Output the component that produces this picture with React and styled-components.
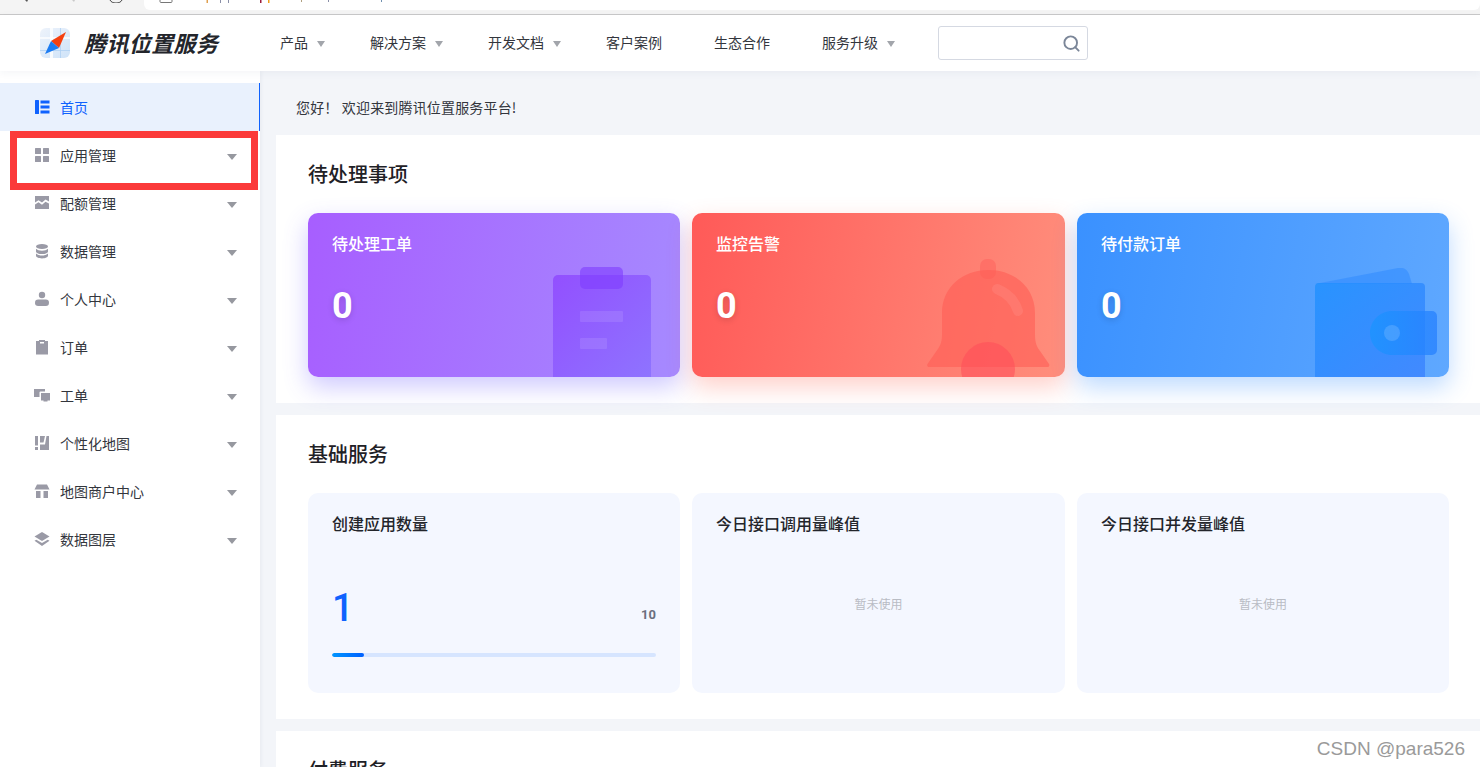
import React from 'react'
import styled, { createGlobalStyle } from 'styled-components'
import { Search } from 'lucide-react'

const GlobalStyle = createGlobalStyle`
  html, body { margin: 0; padding: 0; height: 100%; }
  body {
    overflow: hidden;
    background: #f3f5f9;
    font-family: "Noto Sans CJK SC", "Liberation Sans", sans-serif;
    color: #26282e;
  }
  * { box-sizing: border-box; }
`

const sideItems = [
  { label: '首页', icon: 'home', active: true },
  { label: '应用管理', icon: 'grid' },
  { label: '配额管理', icon: 'quota' },
  { label: '数据管理', icon: 'db' },
  { label: '个人中心', icon: 'user' },
  { label: '订单', icon: 'order' },
  { label: '工单', icon: 'ticket' },
  { label: '个性化地图', icon: 'map' },
  { label: '地图商户中心', icon: 'store' },
  { label: '数据图层', icon: 'layers' },
]

const navItems = [
  { label: '产品', caret: true },
  { label: '解决方案', caret: true },
  { label: '开发文档', caret: true },
  { label: '客户案例' },
  { label: '生态合作' },
  { label: '服务升级', caret: true },
]

function SideIcon({ name }) {
  const fill = name === 'home' ? '#0f62fe' : '#9a9aa6'
  return (
    <svg width="16" height="16" viewBox="0 0 16 16" fill={fill}>
      {name === 'home' && (
        <>
          <rect x="1" y="1" width="4" height="14" rx="0.5" />
          <rect x="6.500" y="1.500" width="9" height="3" />
          <rect x="6.500" y="6.500" width="9" height="3" />
          <rect x="6.500" y="11.500" width="9" height="3" />
        </>
      )}
      {name === 'grid' && (
        <>
          <rect x="1" y="1" width="6" height="6" rx="0.5" />
          <rect x="9" y="1" width="6" height="6" rx="0.5" />
          <rect x="1" y="9" width="6" height="6" rx="0.5" />
          <rect x="9" y="9" width="6" height="6" rx="0.5" />
        </>
      )}
      {name === 'quota' && (
        <path d="M1 1h14v5.500L11.500 4.600 8 7.600 4.500 5.200 1 7.600zM1 9.600l3.500-2.400L8 9.700l3.500-3L15 8.600V14H1z" />
      )}
      {name === 'db' && (
        <>
          <ellipse cx="8" cy="3.500" rx="6" ry="2.600" />
          <path d="M2 5.700c1.200 1.300 3.400 2 6 2s4.800-.7 6-2v2.700c0 1.400-2.700 2.600-6 2.600s-6-1.200-6-2.600z" />
          <path d="M2 10.500c1.200 1.300 3.400 2 6 2s4.800-.7 6-2v2.300c0 1.400-2.700 2.600-6 2.600s-6-1.200-6-2.600z" />
        </>
      )}
      {name === 'user' && (
        <>
          <circle cx="8" cy="4" r="3.200" />
          <rect x="1" y="8.500" width="14" height="6.500" rx="3.200" />
        </>
      )}
      {name === 'order' && (
        <path d="M5 2V1h6v1h3v13.500H2V2zm1 1v1.500h4V3z" fillRule="evenodd" />
      )}
      {name === 'ticket' && (
        <>
          <path d="M0 2h11v2.500H6.500a1 1 0 0 0-1 1V10H0z" />
          <rect x="7" y="6" width="9" height="7.500" />
          <rect x="9.500" y="13" width="4" height="1.500" />
        </>
      )}
      {name === 'map' && (
        <>
          <rect x="1" y="1" width="3" height="9.500" />
          <rect x="1" y="12" width="3" height="3" />
          <path d="M6 1h5l-1.500 6.500H6zM12.500 1H15v14H6v-5.500h5z" />
        </>
      )}
      {name === 'store' && (
        <>
          <path d="M3 1.500h10l2.500 5h-15z" />
          <rect x="2" y="8" width="4.500" height="7" />
          <rect x="9.500" y="8" width="4.500" height="7" />
        </>
      )}
      {name === 'layers' && (
        <>
          <path d="M8 1l7.500 4.500L8 10 .5 5.500z" />
          <path d="M2.300 8.700L8 12.100l5.700-3.400 1.800 1.100L8 15 .5 9.800z" />
        </>
      )}
    </svg>
  )
}

function LogoMark() {
  return (
    <svg width="30" height="30" viewBox="0 0 30 30">
      <defs>
        <linearGradient id="logoBg" x1="0" y1="0" x2="1" y2="1">
          <stop offset="0" stopColor="#eef3fb" />
          <stop offset="1" stopColor="#cfe3f8" />
        </linearGradient>
      </defs>
      <rect width="30" height="30" rx="6" fill="url(#logoBg)" />
      <rect x="10" width="3" height="30" fill="#fff" opacity="0.8" />
      <rect y="9" width="30" height="2" fill="#fff" opacity="0.7" />
      <rect x="20" width="1" height="30" fill="#a9cdf2" opacity="0.7" />
      <rect y="22" width="30" height="1" fill="#a9cdf2" opacity="0.7" />
      <path d="M26 4L11 13l8 7z" fill="#f5400f" />
      <path d="M11 13l8 7L5 26z" fill="#1c7cf2" />
    </svg>
  )
}

function BrowserScraps() {
  return (
    <svg width="420" height="3" viewBox="0 0 420 3">
      <path d="M25 0h3l-1 2z" fill="#555" />
      <path d="M72 0h3l-1 2z" fill="#c9c9c9" />
      <path d="M110 0c1 2 3 3 6 3s5-1 6-3" fill="none" stroke="#444" strokeWidth="1" />
      <path d="M160 0v1.500a1 1 0 0 0 1 1h10a1 1 0 0 0 1-1V0" fill="none" stroke="#777" strokeWidth="1" />
      <rect x="206.500" width="1.500" height="3" fill="#e0a050" />
      <rect x="220" width="1" height="3" fill="#8a8fa8" />
      <rect x="228" width="1" height="3" fill="#8a8fa8" />
      <rect x="260" width="1.500" height="3" fill="#9c1c3c" />
      <rect x="268" width="1.500" height="3" fill="#f0a020" />
      <rect x="301" width="1" height="2" fill="#b0a080" />
      <rect x="328" width="1" height="2" fill="#8a8fa8" />
      <rect x="381" width="1" height="2" fill="#7090b0" />
    </svg>
  )
}

function ClipboardArt() {
  return (
    <svg width="98" height="110" viewBox="0 0 98 110">
      <defs>
        <linearGradient id="clipFill" x1="0" y1="0" x2="1" y2="1">
          <stop offset="0" stopColor="#8f48ff" />
          <stop offset="1" stopColor="#8a70ff" />
        </linearGradient>
      </defs>
      <path d="M0 13a5 5 0 0 1 5-5h88a5 5 0 0 1 5 5v97H0z" fill="url(#clipFill)" opacity="0.85" />
      <rect x="27" y="0" width="43" height="22" rx="5" fill="#7f3cff" opacity="0.6" />
      <rect x="27" y="44" width="43" height="11" rx="1" fill="#fff" opacity="0.1" />
      <rect x="27" y="71" width="27" height="11" rx="1" fill="#fff" opacity="0.1" />
    </svg>
  )
}

function BellArt() {
  return (
    <svg width="123" height="118" viewBox="0 0 123 118">
      <rect x="53" y="0" width="16" height="20" rx="7" fill="#ff6a62" opacity="0.7" />
      <path
        d="M15 54C15 28 36 11 61.500 11S108 28 108 54V76c0 8 2 12 5 16l9 13c.8 1.500 0 3-1.500 3H2c-1.500 0-2.300-1.500-1.500-3l9-13c3-4 5.500-8 5.500-16z"
        fill="#ff5d55"
        opacity="0.6"
      />
      <path d="M70 30c10 4 18 12 21 22" fill="none" stroke="#fff" strokeOpacity="0.08" strokeWidth="10" strokeLinecap="round" />
      <circle cx="61" cy="110" r="27" fill="#ff4d5a" opacity="0.55" />
    </svg>
  )
}

function WalletArt() {
  return (
    <svg width="122" height="109" viewBox="0 0 122 109">
      <defs>
        <linearGradient id="walletFill" x1="0" y1="0" x2="1" y2="1">
          <stop offset="0" stopColor="#1e90ff" />
          <stop offset="1" stopColor="#3b82ff" />
        </linearGradient>
        <linearGradient id="walletClasp" x1="0" y1="0" x2="1" y2="0">
          <stop offset="0" stopColor="#1a94ff" />
          <stop offset="1" stopColor="#2680ff" />
        </linearGradient>
      </defs>
      <path d="M0 16L83 0c5-1 9 1 11 6l3 10z" fill="#2f8bff" opacity="0.55" />
      <path d="M0 19a4 4 0 0 1 4-4h102a4 4 0 0 1 4 4v90H0z" fill="url(#walletFill)" opacity="0.8" />
      <path d="M55 43h62a5 5 0 0 1 5 5v34a5 5 0 0 1-5 5H77c-12 0-22-10-22-22s10-22 22-22z" fill="url(#walletClasp)" opacity="0.75" />
      <circle cx="77" cy="65" r="8" fill="#fff" opacity="0.15" />
    </svg>
  )
}

export default function App() {
  return (
    <Page>
      <GlobalStyle />
      <BrowserStrip>
        <UrlBox />
        <Scraps><BrowserScraps /></Scraps>
      </BrowserStrip>
      <Header>
        <Logo>
          <LogoMark />
          <LogoText>腾讯位置服务</LogoText>
        </Logo>
        <Nav>
          {navItems.map((item) => (
            <NavItem key={item.label}>
              {item.label}
              {item.caret && <NavCaret />}
            </NavItem>
          ))}
        </Nav>
        <SearchBox>
          <Search size={19} color="#7b8698" strokeWidth={2.4} />
        </SearchBox>
      </Header>
      <Body>
        <Sidebar>
          {sideItems.map((item) => (
            <SideRow key={item.label} $active={item.active}>
              <SideIcon name={item.icon} />
              <SideLabel>{item.label}</SideLabel>
              {!item.active && <SideCaret />}
            </SideRow>
          ))}
          <Highlight />
        </Sidebar>
        <Main>
          <Greeting>您好！ 欢迎来到腾讯位置服务平台!</Greeting>
          <Panel>
            <PanelTitle>待处理事项</PanelTitle>
            <CardGrid>
              <StatCard $from="#a75eff" $to="#a68aff" $shadow="rgba(96, 80, 255, 0.3)">
                <StatTitle>待处理工单</StatTitle>
                <StatNumber>0</StatNumber>
                <StatArt $right={29}><ClipboardArt /></StatArt>
              </StatCard>
              <StatCard $from="#ff5a58" $to="#ff8e7c" $shadow="rgba(255, 110, 90, 0.32)">
                <StatTitle>监控告警</StatTitle>
                <StatNumber>0</StatNumber>
                <StatArt $right={15}><BellArt /></StatArt>
              </StatCard>
              <StatCard $from="#3a91ff" $to="#5fa8ff" $shadow="rgba(50, 140, 255, 0.32)">
                <StatTitle>待付款订单</StatTitle>
                <StatNumber>0</StatNumber>
                <StatArt $right={12}><WalletArt /></StatArt>
              </StatCard>
            </CardGrid>
          </Panel>
          <Panel>
            <PanelTitle>基础服务</PanelTitle>
            <CardGrid>
              <UsageCard>
                <UsageTitle>创建应用数量</UsageTitle>
                <UsageRow>
                  <UsageValue>1</UsageValue>
                  <UsageLimit>10</UsageLimit>
                </UsageRow>
                <Track>
                  <Fill style={{ width: `${(1 / 10) * 100}%` }} />
                </Track>
              </UsageCard>
              <UsageCard>
                <UsageTitle>今日接口调用量峰值</UsageTitle>
                <Empty>暂未使用</Empty>
              </UsageCard>
              <UsageCard>
                <UsageTitle>今日接口并发量峰值</UsageTitle>
                <Empty>暂未使用</Empty>
              </UsageCard>
            </CardGrid>
          </Panel>
          <Panel>
            <PanelTitle>付费服务</PanelTitle>
          </Panel>
        </Main>
      </Body>
      <Watermark>CSDN @para526</Watermark>
    </Page>
  )
}

const Page = styled.div`
  position: relative;
  width: 1480px;
  height: 767px;
  overflow: hidden;
  display: flex;
  flex-direction: column;
`

const BrowserStrip = styled.div`
  position: relative;
  height: 15px;
  flex: none;
  padding-left: 144px;
  background: #f4f4f4;
  border-bottom: 1px solid #c9c9c9;
`

const UrlBox = styled.div`
  height: 10px;
  background: #fff;
  border-radius: 0 0 6px 6px;
`

const Scraps = styled.div`
  position: absolute;
  left: 0;
  top: 0;
  display: flex;
`

const Header = styled.header`
  position: relative;
  z-index: 3;
  height: 56px;
  flex: none;
  display: flex;
  align-items: center;
  background: #fff;
  box-shadow: 0 2px 8px rgba(30, 50, 90, 0.05);
`

const Logo = styled.div`
  width: 280px;
  padding-left: 40px;
  display: flex;
  align-items: center;
  gap: 14px;
`

const LogoText = styled.span`
  padding-bottom: 2px;
  font-size: 22px;
  line-height: 30px;
  font-weight: 700;
  font-style: italic;
  letter-spacing: 0.4px;
  color: #23252b;
`

const Nav = styled.nav`
  display: flex;
  gap: 52px;
  padding-bottom: 2px;
`

const NavItem = styled.div`
  display: flex;
  align-items: center;
  font-size: 14px;
  color: #33363d;
`

const NavCaret = styled.i`
  width: 0;
  height: 0;
  margin: 4px -7px 0 9px;
  border-left: 4px solid transparent;
  border-right: 4px solid transparent;
  border-top: 6px solid #a2a5ab;
`

const SearchBox = styled.div`
  width: 150px;
  height: 34px;
  margin-left: 50px;
  padding-right: 6px;
  display: flex;
  align-items: center;
  justify-content: flex-end;
  border: 1px solid #d5d9e2;
  border-radius: 3px;
`

const Body = styled.div`
  flex: 1;
  min-height: 0;
  display: flex;
`

const Sidebar = styled.aside`
  position: relative;
  width: 260px;
  flex: none;
  padding-top: 12px;
  background: #fff;
  box-shadow: 1px 0 4px rgba(30, 50, 90, 0.06);
`

const SideRow = styled.div`
  height: 48px;
  padding: 0 22px 0 34px;
  display: flex;
  align-items: center;
  background: ${(p) => (p.$active ? '#e9f1fd' : 'transparent')};
  border-right: 1px solid ${(p) => (p.$active ? '#0f62fe' : 'transparent')};
  color: ${(p) => (p.$active ? '#0f62fe' : '#33363d')};
`

const SideLabel = styled.span`
  margin-left: 10px;
  flex: 1;
  font-size: 14px;
`

const SideCaret = styled.i`
  width: 0;
  height: 0;
  margin-top: 4px;
  border-left: 5px solid transparent;
  border-right: 5px solid transparent;
  border-top: 6px solid #96989f;
`

const Highlight = styled.div`
  position: absolute;
  left: 10px;
  top: 60px;
  width: 248px;
  height: 59px;
  border: 7px solid #fb3a3a;
`

const Main = styled.main`
  flex: 1;
  min-width: 0;
  padding-left: 16px;
  overflow: hidden;
`

const Greeting = styled.div`
  height: 64px;
  padding: 25px 0 0 20px;
  font-size: 14px;
  line-height: 22px;
  letter-spacing: 0.17px;
  color: #33363d;
`

const Panel = styled.section`
  margin-bottom: 12px;
  padding: 24px 32px 26px;
  background: #fff;
`

const PanelTitle = styled.h2`
  margin: 0 0 24px;
  font-size: 20px;
  line-height: 30px;
  font-weight: 500;
  color: #1f2126;
`

const CardGrid = styled.div`
  width: 1141px;
  display: grid;
  grid-template-columns: 372px 373px 372px;
  gap: 12px;
`

const StatCard = styled.div`
  position: relative;
  height: 164px;
  padding: 18px 24px;
  border-radius: 10px;
  color: #fff;
  background: linear-gradient(100deg, ${(p) => p.$from}, ${(p) => p.$to});
  box-shadow: 0 10px 24px ${(p) => p.$shadow};
`

const StatTitle = styled.div`
  font-size: 16px;
  line-height: 24px;
  font-weight: 500;
`

const StatNumber = styled.div`
  margin-top: 30px;
  font-family: Roboto, "Liberation Sans", sans-serif;
  font-size: 36px;
  line-height: 42px;
  font-weight: 700;
  text-shadow: 0 2px 6px rgba(0, 0, 0, 0.15);
`

const StatArt = styled.div`
  position: absolute;
  right: ${(p) => p.$right}px;
  bottom: 0;
  display: flex;
`

const UsageCard = styled.div`
  position: relative;
  height: 200px;
  padding: 18px 24px;
  border-radius: 10px;
  background: #f4f7ff;
`

const UsageTitle = styled.div`
  font-size: 16px;
  line-height: 24px;
  font-weight: 500;
  color: #23252b;
`

const UsageRow = styled.div`
  margin-top: 47px;
  display: flex;
  align-items: flex-end;
  justify-content: space-between;
`

const UsageValue = styled.div`
  font-family: Roboto, "Liberation Sans", sans-serif;
  font-size: 38px;
  line-height: 52px;
  font-weight: 500;
  color: #0f62fe;
`

const UsageLimit = styled.div`
  margin-bottom: 9px;
  font-family: Roboto, "Liberation Sans", sans-serif;
  font-size: 13px;
  line-height: 20px;
  font-weight: 700;
  color: #6b6f7e;
`

const Track = styled.div`
  margin-top: 19px;
  height: 4px;
  border-radius: 2px;
  background: #d6e5ff;
  overflow: hidden;
`

const Fill = styled.div`
  height: 100%;
  border-radius: 2px;
  background: linear-gradient(90deg, #0096ff, #0060ff);
`

const Empty = styled.div`
  margin-top: 59px;
  text-align: center;
  font-size: 12px;
  line-height: 20px;
  color: #b9bcc4;
`

const Watermark = styled.div`
  position: absolute;
  right: 15px;
  bottom: 6px;
  font-family: "Liberation Sans", sans-serif;
  font-size: 19px;
  line-height: 24px;
  color: #9a9a9a;
`
